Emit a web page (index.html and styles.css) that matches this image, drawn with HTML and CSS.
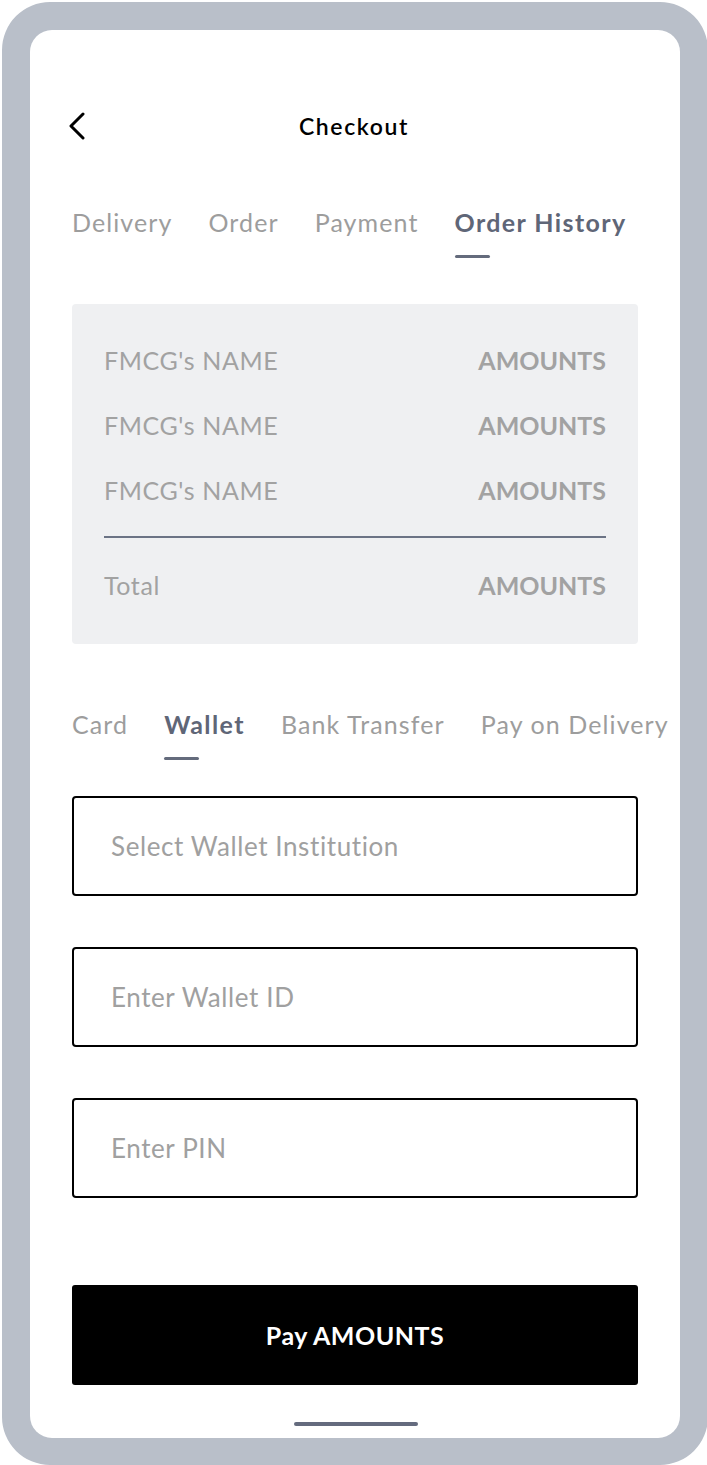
FILE: index.html
```html
<!DOCTYPE html>
<html lang="en">
<head>
  <meta charset="UTF-8">
  <meta name="viewport" content="width=device-width, initial-scale=1.0">
  <title>Checkout</title>
  <link rel="stylesheet" href="styles.css">
</head>
<body>
  <div class="phone">
    <div class="screen">
      <div class="header">
        <button class="back" aria-label="Back">
          <svg width="18" height="28" viewBox="0 0 18 28">
            <path d="M15 2 L3 14 L15 26" fill="none" stroke="#000" stroke-width="3" stroke-linecap="round" stroke-linejoin="round"/>
          </svg>
        </button>
        <h1 class="title">Checkout</h1>
      </div>

      <!-- checkout steps -->
      <nav class="tabs">
        <div class="tab">Delivery</div>
        <div class="tab">Order</div>
        <div class="tab">Payment</div>
        <div class="tab active">Order History</div>
      </nav>

      <div class="summary">
        <div class="row"><span class="name">FMCG's NAME</span><span class="amount">AMOUNTS</span></div>
        <div class="row"><span class="name">FMCG's NAME</span><span class="amount">AMOUNTS</span></div>
        <div class="row"><span class="name">FMCG's NAME</span><span class="amount">AMOUNTS</span></div>
        <div class="divider"></div>
        <div class="row total"><span class="name">Total</span><span class="amount">AMOUNTS</span></div>
      </div>

      <!-- payment methods -->
      <nav class="tabs pay-tabs">
        <div class="tab">Card</div>
        <div class="tab active">Wallet</div>
        <div class="tab">Bank Transfer</div>
        <div class="tab">Pay on Delivery</div>
      </nav>

      <div class="fields">
        <div class="field">Select Wallet Institution</div>
        <div class="field">Enter Wallet ID</div>
        <div class="field">Enter PIN</div>
      </div>

      <button class="pay">Pay AMOUNTS</button>

      <div class="home-bar"></div>
    </div>
  </div>
</body>
</html>
```

FILE: styles.css
```css
html, body {
  margin: 0;
  padding: 0;
  background: #fff;
  overflow: hidden;
}
body {
  width: 707px;
  height: 1465px;
  padding: 2px 0 0 2px;
  box-sizing: border-box;
  font-family: "Lato", "Liberation Sans", sans-serif;
}
.phone {
  width: 706px;
  height: 1463px;
  box-sizing: border-box;
  border: 28px solid #b9bfc9;
  border-bottom-width: 27px;
  border-radius: 48px;
  background: #b9bfc9;
}
.screen {
  height: 100%;
  background: #fff;
  border-radius: 22px;
  padding: 71px 42px 0;
  box-sizing: border-box;
  display: flex;
  flex-direction: column;
  overflow: hidden;
}
.header {
  position: relative;
  height: 50px;
  display: flex;
  align-items: center;
  justify-content: center;
}
.back {
  position: absolute;
  left: -4px;
  top: 11px;
  padding: 0;
  border: none;
  background: none;
}
.back svg {
  display: block;
}
.title {
  margin: 0 0 0 -2px;
  font-size: 23px;
  font-weight: 600;
  letter-spacing: 1.6px;
  color: #000;
}
.tabs {
  display: flex;
  gap: 36px;
  margin-top: 56px;
  white-space: nowrap;
}
.tab {
  font-size: 25px;
  line-height: 30px;
  letter-spacing: 1.1px;
  color: #9d9d9d;
  display: flex;
  flex-direction: column;
}
.tab::after {
  content: "";
  display: block;
  width: 35px;
  height: 3px;
  margin-top: 18px;
  border-radius: 2px;
}
.tab.active {
  color: #5f6677;
  font-weight: 700;
  letter-spacing: 1.4px;
}
.tab.active::after {
  background: #646b7c;
}
.summary {
  margin-top: 46px;
  background: #eff0f2;
  border-radius: 4px;
  padding: 41px 32px 44px;
  display: flex;
  flex-direction: column;
  gap: 35px;
}
.row {
  display: flex;
  justify-content: space-between;
  line-height: 30px;
  font-size: 25px;
}
.name {
  color: #a2a2a2;
  letter-spacing: 0.6px;
}
.amount {
  color: #a2a2a2;
  font-weight: 700;
}
.divider {
  height: 2px;
  background: #6b7385;
  margin-top: -4px;
}
.row.total {
  margin-top: -3px;
}
.pay-tabs {
  margin-top: 65px;
}
.fields {
  margin-top: 36px;
  display: flex;
  flex-direction: column;
  gap: 51px;
}
.field {
  height: 100px;
  box-sizing: border-box;
  border: 2px solid #000;
  border-radius: 4px;
  padding-left: 37px;
  display: flex;
  align-items: center;
  font-size: 26px;
  letter-spacing: 0.6px;
  color: #a0a0a0;
}
.pay {
  margin-top: 87px;
  height: 100px;
  border: none;
  border-radius: 3px;
  background: #000;
  color: #fff;
  font-family: inherit;
  font-size: 25px;
  font-weight: 700;
  letter-spacing: 0.5px;
}
.home-bar {
  align-self: center;
  width: 124px;
  height: 4px;
  border-radius: 2px;
  background: #646b7e;
  margin-top: 37px;
  margin-left: 2px;
}
```
